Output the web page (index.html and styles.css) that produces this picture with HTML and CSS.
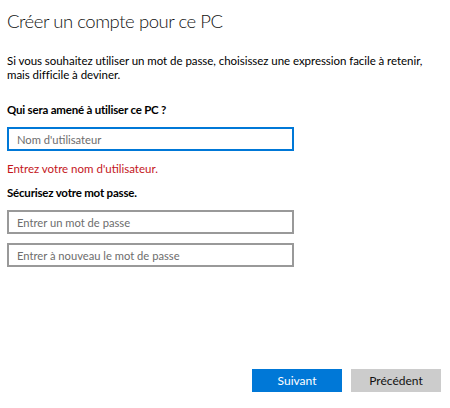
FILE: index.html
```html
<!DOCTYPE html>
<html lang="fr">
<head>
    <meta charset="UTF-8">
    <title>Créer un compte pour ce PC</title>
    <link rel="stylesheet" href="styles.css">
</head>
<body>
    <div class="page">
        <h1>Créer un compte pour ce PC</h1>

        <p class="intro">Si vous souhaitez utiliser un mot de passe, choisissez une expression facile à retenir,<br>mais difficile à deviner.</p>

        <h3>Qui sera amené à utiliser ce PC ?</h3>
        <input type="text" class="field focus" placeholder="Nom d'utilisateur">
        <div class="error">Entrez votre nom d'utilisateur.</div>

        <h3>Sécurisez votre mot passe.</h3>
        <input type="password" class="field" placeholder="Entrer un mot de passe">
        <input type="password" class="field" placeholder="Entrer à nouveau le mot de passe">

        <div class="btn-group">
            <button class="btn primary">Suivant</button>
            <button class="btn">Précédent</button>
        </div>
    </div>
</body>
</html>
```

FILE: styles.css
```css
body {
    margin: 0;
    background-color: #fff;
    font-family: Lato, "Open Sans", sans-serif;
    color: #000;
}

.page {
    width: 450px;
    height: 408px;
    box-sizing: border-box;
    padding: 8px 0 0 7px;
    display: flex;
    flex-direction: column;
}

h1 {
    margin: 0;
    font-size: 18.5px;
    font-weight: 300;
    line-height: 26px;
    letter-spacing: -0.45px;
    color: #111;
}

.intro {
    margin: 20px 0 0;
    font-size: 11.5px;
    line-height: 14px;
    letter-spacing: -0.05px;
    white-space: nowrap;
}

h3 {
    margin: 21px 0 0;
    font-size: 11.5px;
    font-weight: 700;
    line-height: 14px;
    letter-spacing: -0.2px;
}

.field {
    display: block;
    width: 287px;
    height: 24px;
    box-sizing: border-box;
    margin-top: 10px;
    padding: 0 8px;
    border: 2px solid #999;
    font-family: inherit;
    font-size: 11.2px;
    outline: none;
}

.field::placeholder {
    color: #6d6d6d;
}

.field.focus {
    border-color: #0078d7;
}

.error {
    margin-top: 11px;
    font-size: 11.5px;
    line-height: 14px;
    color: #c4161c;
}

.error + h3 {
    margin-top: 10px;
}

.field + .field {
    margin-top: 9px;
}

.btn-group {
    margin-top: auto;
    margin-bottom: 16px;
    display: flex;
    justify-content: flex-end;
    gap: 9px;
    padding-right: 9px;
}

.btn {
    width: 90px;
    height: 23px;
    border: none;
    background-color: #ccc;
    color: #111;
    font-family: inherit;
    font-size: 12px;
    cursor: pointer;
}

.btn.primary {
    background-color: #0078d7;
    color: #fff;
}
```
